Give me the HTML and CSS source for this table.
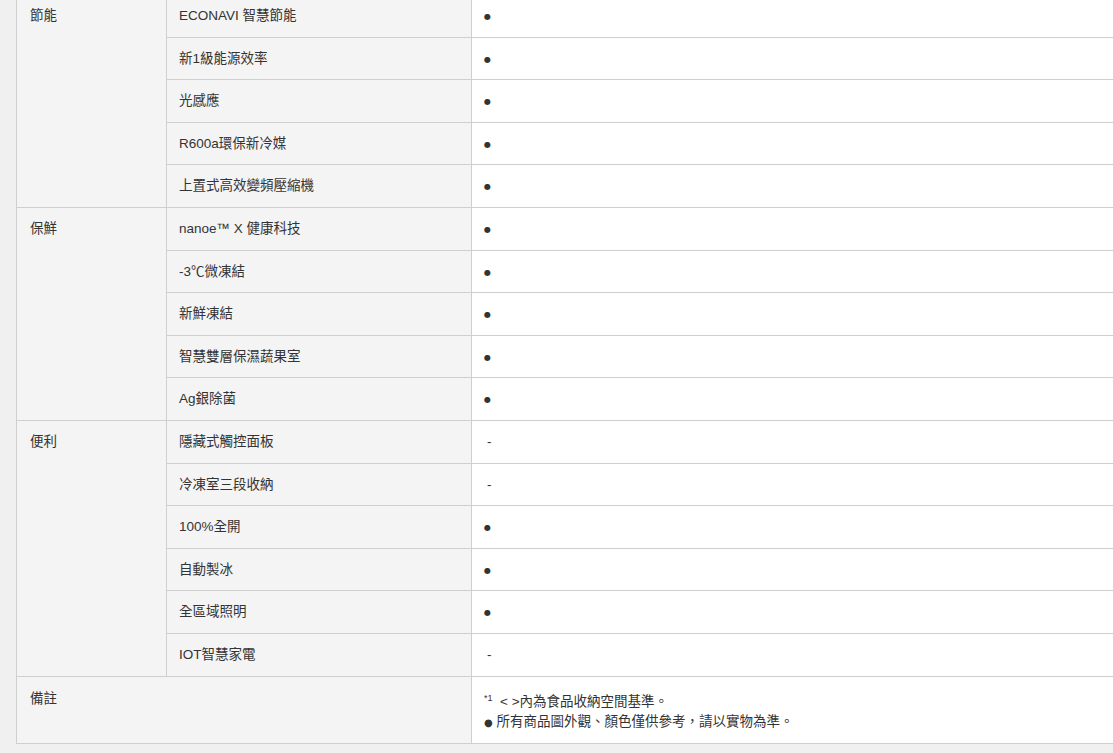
FILE: index.html
```html
<!DOCTYPE html>
<html lang="zh-Hant">
<head>
<meta charset="utf-8">
<title>規格</title>
<link rel="stylesheet" href="styles.css">
</head>
<body>
<div class="page">
<div class="spec">
  <div class="cat r5">節能</div>
  <div class="f">ECONAVI 智慧節能</div><div class="v"><span class="dot">●</span></div>
  <div class="f">新1級能源效率</div><div class="v"><span class="dot">●</span></div>
  <div class="f">光感應</div><div class="v"><span class="dot">●</span></div>
  <div class="f">R600a環保新冷媒</div><div class="v"><span class="dot">●</span></div>
  <div class="f">上置式高效變頻壓縮機</div><div class="v"><span class="dot">●</span></div>

  <div class="cat r5">保鮮</div>
  <div class="f">nanoe™ X 健康科技</div><div class="v"><span class="dot">●</span></div>
  <div class="f">-3℃微凍結</div><div class="v"><span class="dot">●</span></div>
  <div class="f">新鮮凍結</div><div class="v"><span class="dot">●</span></div>
  <div class="f">智慧雙層保濕蔬果室</div><div class="v"><span class="dot">●</span></div>
  <div class="f">Ag銀除菌</div><div class="v"><span class="dot">●</span></div>

  <div class="cat r6">便利</div>
  <div class="f">隱藏式觸控面板</div><div class="v"><span class="dash">-</span></div>
  <div class="f">冷凍室三段收納</div><div class="v"><span class="dash">-</span></div>
  <div class="f">100%全開</div><div class="v"><span class="dot">●</span></div>
  <div class="f">自動製冰</div><div class="v"><span class="dot">●</span></div>
  <div class="f">全區域照明</div><div class="v"><span class="dot">●</span></div>
  <div class="f">IOT智慧家電</div><div class="v"><span class="dash">-</span></div>

  <div class="cat notehead">備註</div>
  <div class="v note"><sup>*1</sup>&nbsp; &lt; &gt;內為食品收納空間基準。<br><span class="ndot">●</span> 所有商品圖外觀、顏色僅供參考，請以實物為準。</div>
</div>
</div>
</body>
</html>
```

FILE: styles.css
```css
html, body {
  margin: 0;
  padding: 0;
  background: #f0f0f0;
  overflow: hidden;
}
body {
  font-family: "Liberation Sans", Arial, "Noto Sans CJK TC", sans-serif;
  font-size: 13.5px;
  color: #333;
}
.page {
  padding-left: 16px;
  margin-top: -6px;
}
.spec {
  display: grid;
  width: 1200px;
  grid-template-columns: 149px 304px 1fr;
  grid-template-rows: repeat(16, 41.6px) 66px;
  gap: 1px;
  padding: 1px;
  background: #cfcfcf;
}
.spec > div {
  padding: 12px 12px 0;
  line-height: 17.6px;
  overflow: hidden;
}
.cat {
  background: #f4f4f4;
  grid-column: 1;
  padding-left: 13px !important;
}
.r5 { grid-row: span 5; }
.r6 { grid-row: span 6; }
.f {
  background: #f4f4f4;
  grid-column: 2;
}
.v {
  background: #fff;
  grid-column: 3;
}
.dot {
  font-family: "DejaVu Sans", sans-serif;
  font-size: 8px;
  vertical-align: 1px;
}
.dash {
  padding-left: 3px;
}
.spec > .notehead {
  grid-column: 1 / span 2;
  padding-top: 13px;
}
.spec > .note {
  grid-column: 3;
  padding-top: 15px;
  line-height: 20px;
}
.note sup {
  font-size: 9px;
  line-height: 0;
  vertical-align: 5px;
}
.ndot {
  font-family: "DejaVu Sans", sans-serif;
  font-size: 10px;
}
```
